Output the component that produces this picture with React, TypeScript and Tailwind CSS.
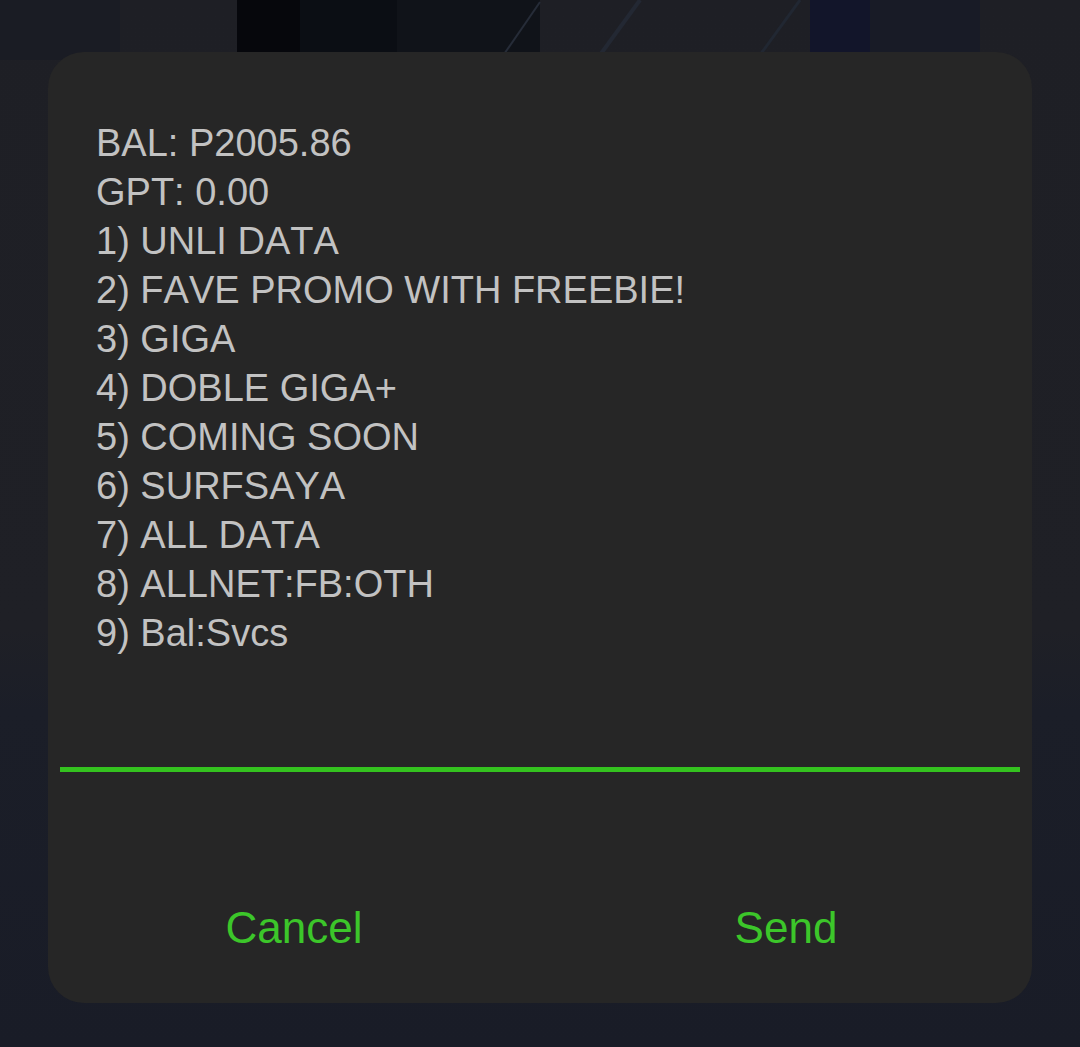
const lines = [
  "BAL: P2005.86",
  "GPT: 0.00",
  "1) UNLI DATA",
  "2) FAVE PROMO WITH FREEBIE!",
  "3) GIGA",
  "4) DOBLE GIGA+",
  "5) COMING SOON",
  "6) SURFSAYA",
  "7) ALL DATA",
  "8) ALLNET:FB:OTH",
  "9) Bal:Svcs",
];

// Dark wallpaper strokes behind the dialog
function Wallpaper() {
  return (
    <svg className="absolute inset-0 h-full w-full" viewBox="0 0 1080 1047" preserveAspectRatio="none">
      <defs>
        <linearGradient id="bg" x1="0" y1="0" x2="0" y2="1">
          <stop offset="0" stopColor="#1e1f25" />
          <stop offset="0.6" stopColor="#1f2026" />
          <stop offset="0.68" stopColor="#1b1e28" />
          <stop offset="1" stopColor="#191c27" />
        </linearGradient>
      </defs>
      <rect width="1080" height="1047" fill="url(#bg)" />
      <rect x="0" y="0" width="120" height="60" fill="#1a1c24" />
      <rect x="237" y="0" width="160" height="55" fill="#06070c" />
      <rect x="300" y="0" width="240" height="55" fill="#0d1017" opacity="0.8" />
      <rect x="820" y="0" width="160" height="55" fill="#161a26" opacity="0.7" />
      <rect x="810" y="0" width="60" height="55" fill="#12152a" />
      <path d="M540 2 L500 60" stroke="#262c38" strokeWidth="2" fill="none" />
      <path d="M640 0 L600 55" stroke="#232833" strokeWidth="4" fill="none" />
      <path d="M800 0 L760 55" stroke="#212732" strokeWidth="3" fill="none" />
    </svg>
  );
}

export default function App() {
  return (
    <div className="relative h-[1047px] w-[1080px] overflow-hidden bg-[#1e1f25]">
      <Wallpaper />
      <div className="relative pt-[52px] pl-[48px]">
        <div
          className="flex h-[951px] w-[984px] flex-col rounded-[36px] bg-[#262626] [font-kerning:none]"
          style={{ fontFamily: '"Liberation Sans", Arial, sans-serif' }}
        >
          <div className="pl-[48px] pt-[67px] text-[38px] leading-[49px] text-[#c2c2c2]">
            {lines.map((l) => (
              <div key={l} className="whitespace-pre">
                {l}
              </div>
            ))}
          </div>

          <div className="mx-[12px] mt-[109px] h-[5px] bg-[#34c21f]" />

          <div className="mt-[134px] grid grid-cols-2 text-[44px] leading-[44px] text-[#3cc62a]">
            <div className="text-center">Cancel</div>
            <div className="text-center">Send</div>
          </div>
        </div>
      </div>
    </div>
  );
}
